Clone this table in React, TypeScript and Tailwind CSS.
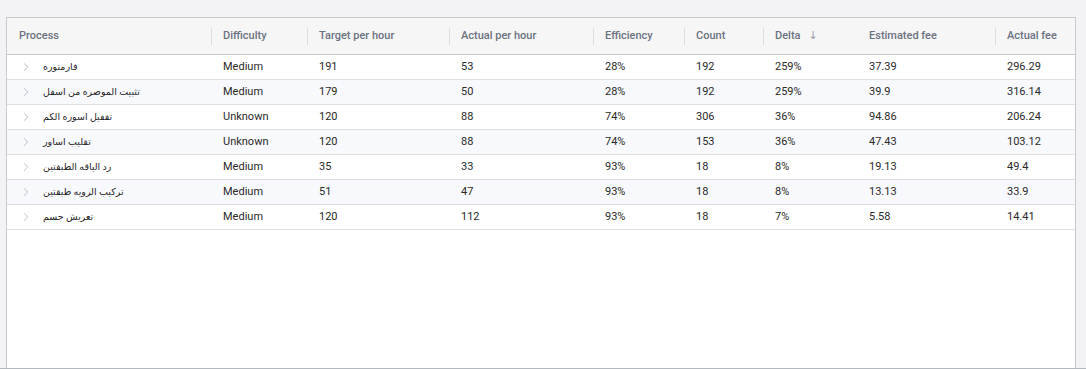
import { ChevronRight } from 'lucide-react';

type Row = {
  process: string;
  difficulty: string;
  target: string;
  actual: string;
  efficiency: string;
  count: string;
  delta: string;
  estFee: string;
  actualFee: string;
};

const rows: Array<Row> = [
  { process: 'فارمتوره', difficulty: 'Medium', target: '191', actual: '53', efficiency: '28%', count: '192', delta: '259%', estFee: '37.39', actualFee: '296.29' },
  { process: 'تثبيت الموصره من اسفل', difficulty: 'Medium', target: '179', actual: '50', efficiency: '28%', count: '192', delta: '259%', estFee: '39.9', actualFee: '316.14' },
  { process: 'تقفيل اسوره الكم', difficulty: 'Unknown', target: '120', actual: '88', efficiency: '74%', count: '306', delta: '36%', estFee: '94.86', actualFee: '206.24' },
  { process: 'تقليب اساور', difficulty: 'Unknown', target: '120', actual: '88', efficiency: '74%', count: '153', delta: '36%', estFee: '47.43', actualFee: '103.12' },
  { process: 'رد الياقه الطبقتين', difficulty: 'Medium', target: '35', actual: '33', efficiency: '93%', count: '18', delta: '8%', estFee: '19.13', actualFee: '49.4' },
  { process: 'تركيب الرويه طبقتين', difficulty: 'Medium', target: '51', actual: '47', efficiency: '93%', count: '18', delta: '8%', estFee: '13.13', actualFee: '33.9' },
  { process: 'تعريش جسم', difficulty: 'Medium', target: '120', actual: '112', efficiency: '93%', count: '18', delta: '7%', estFee: '5.58', actualFee: '14.41' },
];

type Col = { label: string; width: string; divider: boolean; sort?: boolean };

const cols: Array<Col> = [
  { label: 'Process', width: 'w-[204px]', divider: false },
  { label: 'Difficulty', width: 'w-[96px]', divider: true },
  { label: 'Target per hour', width: 'w-[142px]', divider: true },
  { label: 'Actual per hour', width: 'w-[144px]', divider: true },
  { label: 'Efficiency', width: 'w-[91px]', divider: true },
  { label: 'Count', width: 'w-[79px]', divider: true },
  { label: 'Delta', width: 'w-[94px]', divider: true, sort: true },
  { label: 'Estimated fee', width: 'w-[138px]', divider: false },
  { label: 'Actual fee', width: 'w-[80px]', divider: true },
];

const Cell = ({ children }: { children: React.ReactNode }) => (
  <td className="h-[25px] p-0 pl-3 pr-2 text-[11px] text-[#2a2a2a] whitespace-nowrap">
    {children}
  </td>
);

const App = () => {
  return (
    <div
      className="h-[369px] overflow-hidden bg-[#f3f3f5] border-b border-[#b3b8be] pt-[17px] pl-[6px] pr-[10px]"
      style={{ fontFamily: 'Roboto, "DejaVu Sans", sans-serif' }}
    >
      <div className="h-[400px] bg-white border border-[#c8c9cc]">
        <table className="table-fixed border-collapse w-full">
          <thead>
            <tr className="bg-[#f6f6f7] border-b border-[#c8c9cc]">
              {cols.map((col) => (
                <th key={col.label} className={`${col.width} h-[36px] p-0 font-medium text-left`}>
                  <div className="flex items-center h-[36px]">
                    <span className={`w-px h-[17px] ${col.divider ? 'bg-[#dcdde0]' : 'bg-transparent'}`} />
                    <span className="ml-[11px] text-[11px] text-[#6b7280]">{col.label}</span>
                    {col.sort && <span className="ml-[8px] text-[11px] text-[#9aa0a8]">↓</span>}
                  </div>
                </th>
              ))}
            </tr>
          </thead>
          <tbody>
            {rows.map((row, i) => (
              <tr
                key={row.process}
                className={`border-b border-[#dfe0e2] ${i % 2 === 1 ? 'bg-[#f8f9fc]' : 'bg-white'}`}
              >
                <td className="h-[25px] p-0 pl-[12px]">
                  <div className="flex items-center">
                    <ChevronRight size={14} strokeWidth={1.2} className="text-[#a0a4aa]" />
                    <span className="ml-[10px] text-[9.5px] text-[#1f1f1f] whitespace-nowrap">{row.process}</span>
                  </div>
                </td>
                <Cell>{row.difficulty}</Cell>
                <Cell>{row.target}</Cell>
                <Cell>{row.actual}</Cell>
                <Cell>{row.efficiency}</Cell>
                <Cell>{row.count}</Cell>
                <Cell>{row.delta}</Cell>
                <Cell>{row.estFee}</Cell>
                <Cell>{row.actualFee}</Cell>
              </tr>
            ))}
          </tbody>
        </table>
      </div>
    </div>
  );
};

export default App;
